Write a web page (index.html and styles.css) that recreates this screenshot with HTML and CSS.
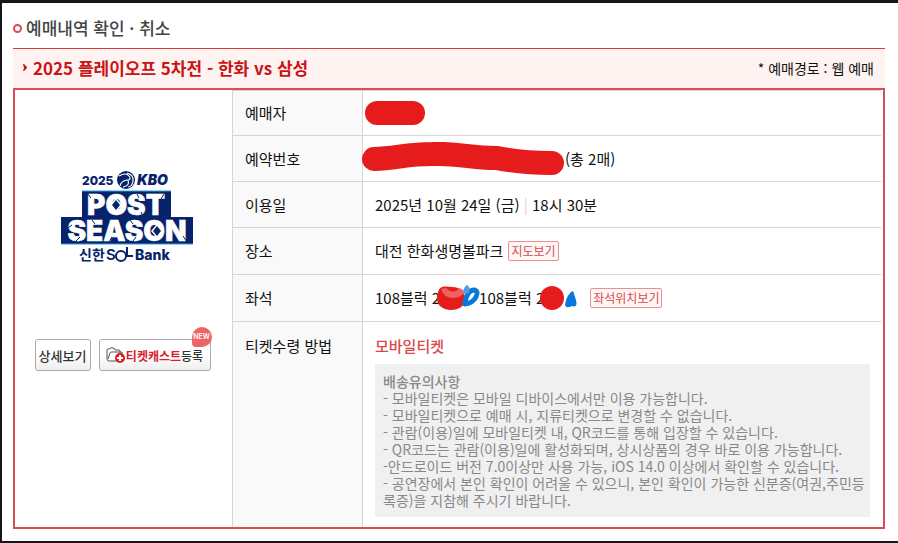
FILE: index.html
```
<!DOCTYPE html>
<html lang="ko">
<head>
	<meta charset="UTF-8">
	<title>예매내역 확인 · 취소</title>
	<link rel="stylesheet" href="styles.css">
</head>
<body>
	<div class="page">
		<h1 class="page-title"><span class="ring"></span>예매내역 확인 · 취소</h1>

		<div class="game-bar">
			<svg class="arrow" width="4" height="7" viewBox="0 0 4 7"><path d="M0 0h1l3 3v1L1 7H0l1-3z" fill="#c81414"/></svg>
			<h2>2025 플레이오프 5차전 - 한화 vs 삼성</h2>
			<p class="route">* 예매경로 : 웹 예매</p>
		</div>

		<div class="detail">
			<div class="poster">
				<svg class="logo" width="134" height="94" viewBox="0 0 134 94" role="img" aria-label="2025 KBO POST SEASON">
					<g fill="#06236b" font-family="Inter, sans-serif">
						<text x="22" y="15" font-size="12" font-weight="800">2025</text>
						<text x="77" y="15" font-size="14" font-weight="900" font-style="italic">KBO</text>
						<circle cx="66" cy="10" r="9"/>
						<path d="M59 6q7-4 10 0t-2 4q-6 1-7 6M63 17q7-1 5-7M67 3q7 2 6 8t-5 6" fill="none" stroke="#fff" stroke-width="1.200"/>
						<path d="M22 21h89v26h22v27H1V47h21z"/>
						<path d="M22 21h89M1 74h132" stroke="#2f9ee6" stroke-width="1"/>
						<g fill="#fff" stroke="#fff" stroke-width=".5" font-size="28" font-weight="900" text-anchor="middle">
							<text x="66" y="45">POST</text>
							<text x="67" y="71">SEASON</text>
						</g>
						<path d="M56 28l6 7-6 7-6-7zM97 54l6 7-6 7-6-7z" fill="#fff"/>
						<path d="M56 30l4 5-4 5-4-5zM97 56l4 5-4 5-4-5z"/>
						<path d="M28 24l3 4M38 41l3 4M77 24l2 4M81 42l2 4M104 24l-3 5M8 58l4-3M16 71l4-4M32 50l3 4M49 72l3-5M70 50l3 4M73 71l3-4M114 50l5 6M127 72l-4-6" stroke="#06236b" stroke-width="1"/>
						<text x="19" y="90" font-size="14" font-weight="700" font-family="Noto Sans CJK KR, sans-serif">신한</text>
						<text x="46" y="90" font-size="15" font-weight="600">S</text>
						<circle cx="61" cy="86" r="5" fill="none" stroke="#06236b" stroke-width="2"/>
						<path d="M67 77v9h6" fill="none" stroke="#06236b" stroke-width="2"/>
						<text x="75" y="90" font-size="14" font-weight="800">Bank</text>
					</g>
				</svg>
				<div class="buttons">
					<button class="btn" type="button">상세보기</button>
					<button class="btn cast" type="button">
						<svg width="19" height="16" viewBox="0 0 19 16">
							<path d="M1 12V3q0-1 1-1h1l1-1h4l1 2h4q1 0 1 1v2M1 12q0 2 2 2h7M2 12l2-6q0-1 2-1h9q2 0 1 2l-1 2" fill="#fff" stroke="#555" stroke-width="1"/>
							<circle cx="14" cy="11" r="5" fill="#d62027"/>
							<path d="M14 8v6M11 11h6" stroke="#fff" stroke-width="2"/>
						</svg>
						<span><em>티켓캐스트</em>등록</span>
						<span class="badge">NEW</span>
					</button>
				</div>
			</div>

			<table class="info">
				<tr class="first">
					<th scope="row">예매자</th>
					<td>
						<svg class="mark name" width="60" height="24" viewBox="0 0 60 24"><path d="M12 12h36" stroke="#e61c1c" stroke-width="24" stroke-linecap="round"/></svg>
					</td>
				</tr>
				<tr>
					<th scope="row">예약번호</th>
					<td>
						<div class="line">
							<svg class="mark number" width="202" height="34" viewBox="0 0 202 34"><path d="M12 17C35 16 45 12 70 12C100 11 105 16 135 16C155 20 170 21 190 21" fill="none" stroke="#e61c1c" stroke-width="24" stroke-linecap="round"/></svg>
							<span>(총 2매)</span>
						</div>
					</td>
				</tr>
				<tr>
					<th scope="row">이용일</th>
					<td>2025년 10월 24일 (금) <span class="bar">|</span> 18시 30분</td>
				</tr>
				<tr class="tall">
					<th scope="row">장소</th>
					<td>
						<div class="line">대전 한화생명볼파크 <button class="small" type="button">지도보기</button></div>
					</td>
				</tr>
				<tr class="tall">
					<th scope="row">좌석</th>
					<td>
						<div class="line seats">
							<span>108블럭 2</span>
							<svg class="mark seat" width="46" height="26" viewBox="0 0 46 26">
								<path d="M2 8C3 1 8 1 16 2C25 2 29 8 29 14C29 21 23 25 15 25C6 25-2 19 2 8z" fill="#e61c1c"/>
								<path d="M29 18Q31 5 38 5Q43 6 40 12Q37 18 29 19" fill="none" stroke="#0878db" stroke-width="5" stroke-linecap="round"/>
								<path d="M5 4q3 9 12 9 10 0 11-7l-4-3q-7 7-14 0z" fill="#f06060"/>
								<path d="M27 9q0-7 4-9 4 2 2 8z" fill="#519fe3"/>
							</svg>
							<span>108블럭 2</span>
							<svg class="mark seat" width="38" height="26" viewBox="0 0 38 26">
								<circle cx="12" cy="13" r="12" fill="#e61c1c"/>
								<path d="M25 20q1-8 6-13 3-2 3 2l2 6q2 8-4 6-6 3-7-1z" fill="#0878db"/>
							</svg>
							<button class="small" type="button">좌석위치보기</button>
						</div>
					</td>
				</tr>
				<tr class="delivery">
					<th scope="row">티켓수령 방법</th>
					<td>
						<strong class="method">모바일티켓</strong>
						<div class="notice">
							<strong>배송유의사항</strong><br>
							- 모바일티켓은 모바일 디바이스에서만 이용 가능합니다.<br>
							- 모바일티켓으로 예매 시, 지류티켓으로 변경할 수 없습니다.<br>
							- 관람(이용)일에 모바일티켓 내, QR코드를 통해 입장할 수 있습니다.<br>
							- QR코드는 관람(이용)일에 활성화되며, 상시상품의 경우 바로 이용 가능합니다.<br>
							-안드로이드 버전 7.0이상만 사용 가능, iOS 14.0 이상에서 확인할 수 있습니다.<br>
							- 공연장에서 본인 확인이 어려울 수 있으니, 본인 확인이 가능한 신분증(여권,주민등록증)을 지참해 주시기 바랍니다.
						</div>
					</td>
				</tr>
			</table>
		</div>
	</div>
</body>
</html>
```
FILE: styles.css
```
*{margin:0;padding:0;box-sizing:border-box}
body{
	font-family:"Noto Sans CJK KR", sans-serif;
	font-size:15px;
	line-height:20px;
	color:#111;
	background-color:#fff;
}
button{
	font-family:inherit;
	cursor:pointer;
}
.page{
	min-height:100vh;
	padding:0 13px 12px 11px;
	border:solid #17161a;
	border-width:3px 0 2px 2px;
}

/*제목*/
.page-title{
	display:flex;
	align-items:center;
	gap:4px;
	height:45px;
	padding-top:5px;
	font-size:17px;
	font-weight:500;
	color:#444;
}
.ring{
	width:9px;
	height:9px;
	border:2px solid #dd4b55;
	border-radius:50%;
}
.game-bar{
	display:flex;
	align-items:center;
	height:40px;
	padding:0 11px 2px 10px;
	border-top:1px solid #d0403f;
	background-color:#fff3f2;
}
.game-bar h2{
	margin-left:6px;
	font-size:17px;
	font-weight:700;
	color:#c81414;
}
.route{
	margin-left:auto;
	font-size:14px;
}

/*예매 상세*/
.detail{
	display:flex;
	border:2px solid #d55054;
	padding-right:2px;
}
.poster{
	flex:0 0 217px;
	display:flex;
	flex-direction:column;
	align-items:center;
	padding:80px 2px 0 0;
}
.logo{
	margin-left:8px;
}
.buttons{
	display:flex;
	gap:8px;
	margin-top:75px;
}
.btn{
	position:relative;
	display:flex;
	align-items:center;
	justify-content:center;
	width:56px;
	height:32px;
	border:1px solid #aaa;
	border-radius:3px;
	background:linear-gradient(#fff 50%, #eee);
	font-size:13px;
	font-weight:500;
	color:#333;
	white-space:nowrap;
}
.cast{
	gap:1px;
	width:112px;
	font-size:12px;
}
.cast em{
	font-style:normal;
	font-weight:700;
	color:#d62027;
}
.badge{
	position:absolute;
	top:-13px;
	right:-2px;
	width:20px;
	height:20px;
	border-radius:50% 50% 50% 20%;
	background-color:#ee6468;
	font:600 7px/20px Inter, sans-serif;
	color:#fff;
}
.info{
	flex:1;
	border-collapse:collapse;
	border-left:1px solid #d5d5d5;
}
.info tr{
	height:46px;
	border-top:1px solid #d5d5d5;
}
.info tr.first{
	height:45px;
}
.info tr.tall{
	height:47px;
}
.info th{
	width:130px;
	padding-left:12px;
	border-right:1px solid #d5d5d5;
	background-color:#f9f9f9;
	font-weight:400;
	text-align:left;
	white-space:nowrap;
}
.info td{
	padding-left:12px;
}
.line{
	display:flex;
	align-items:center;
	gap:5px;
}
.seats{
	gap:0;
}
.mark{
	display:block;
	flex:none;
}
.name{
	margin-left:-10px;
}
.number{
	margin-left:-13px;
}
.number + span{
	margin-left:-4px;
}
.seat{
	margin:0 -3px 0 -4px;
}
.bar{
	color:#e0cfcf;
}
.small{
	height:20px;
	padding:0 2px;
	border:1px solid #ea9092;
	border-radius:2px;
	background-color:#fff6f6;
	font-size:12px;
	line-height:18px;
	color:#d9484c;
}
.seats .small{
	margin-left:15px;
}
.info .delivery th,
.info .delivery td{
	padding-top:14px;
	vertical-align:top;
}
.info .delivery td{
	padding-right:11px;
	padding-bottom:10px;
}
.method{
	display:block;
	font-weight:500;
	color:#d9484c;
}
.notice{
	margin-top:8px;
	padding:9px 4px 8px 8px;
	background-color:#f0f0f0;
	font-size:14px;
	line-height:17px;
	color:#888;
	word-break:break-all;
}
.notice strong{
	font-weight:500;
}
```
